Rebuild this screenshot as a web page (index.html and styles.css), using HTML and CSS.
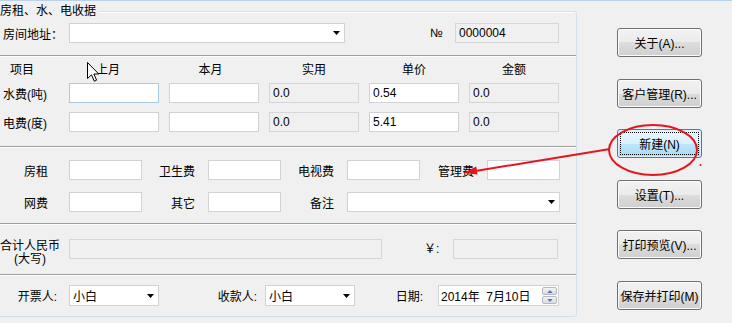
FILE: index.html
```html
<!DOCTYPE html>
<html lang="zh-CN">
<head>
<meta charset="utf-8">
<title>房租、水、电收据</title>
<link rel="stylesheet" href="styles.css">
</head>
<body>
<div class="window">
  <div class="group">
    <span class="legend">房租、水、电收据</span>

    <div class="sec sec-addr">
      <span class="addr-lbl">房间地址：</span>
      <div class="combo addr-combo"><span></span><svg class="arr" width="7" height="4" viewBox="0 0 7 4"><path d="M0 0h7L3.5 4z"/></svg></div>
      <span class="no">№</span>
      <div class="field ro no-box">0000004</div>
    </div>

    <div class="sec sec-util">
      <div class="util-grid hdr">
        <span class="h-item">项目</span>
        <span class="h h-prev">上月</span>
        <span class="h h-cur">本月</span>
        <span class="h">实用</span>
        <span class="h">单价</span>
        <span class="h">金额</span>
      </div>
      <div class="util-grid rows">
        <span class="row-lbl">水费(吨)</span>
        <div class="field hover"></div>
        <div class="field"></div>
        <div class="field ro">0.0</div>
        <div class="field">0.54</div>
        <div class="field ro">0.0</div>
        <span class="row-lbl">电费(度)</span>
        <div class="field"></div>
        <div class="field"></div>
        <div class="field ro">0.0</div>
        <div class="field">5.41</div>
        <div class="field ro">0.0</div>
      </div>
    </div>

    <div class="sec sec-fees">
      <span class="f-lbl first">房租</span>
      <div class="field"></div>
      <span class="f-lbl">卫生费</span>
      <div class="field"></div>
      <span class="f-lbl">电视费</span>
      <div class="field"></div>
      <span class="f-lbl">管理费</span>
      <div class="field"></div>
      <span class="f-lbl first">网费</span>
      <div class="field"></div>
      <span class="f-lbl">其它</span>
      <div class="field"></div>
      <span class="f-lbl">备注</span>
      <div class="combo memo"><span></span><svg class="arr" width="7" height="4" viewBox="0 0 7 4"><path d="M0 0h7L3.5 4z"/></svg></div>
    </div>

    <div class="sec sec-total">
      <span class="total-lbl">合计人民币<br>(大写)</span>
      <div class="field ro big"></div>
      <span class="yen">￥:</span>
      <div class="field ro yen-box"></div>
    </div>

    <div class="sec sec-sign">
      <span class="s-lbl s1">开票人:</span>
      <div class="combo sel"><span>小白</span><svg class="arr" width="7" height="4" viewBox="0 0 7 4"><path d="M0 0h7L3.5 4z"/></svg></div>
      <span class="s-lbl s2">收款人:</span>
      <div class="combo sel"><span>小白</span><svg class="arr" width="7" height="4" viewBox="0 0 7 4"><path d="M0 0h7L3.5 4z"/></svg></div>
      <span class="s-lbl s3">日期:</span>
      <div class="date">
        <span>2014年&nbsp;&nbsp;7月10日</span>
        <div class="spin">
          <div class="spin-btn"><svg width="7" height="4" viewBox="0 0 7 4"><path d="M0 4h7L3.5 0z"/></svg></div>
          <div class="spin-btn"><svg width="7" height="4" viewBox="0 0 7 4"><path d="M0 0h7L3.5 4z"/></svg></div>
        </div>
      </div>
    </div>
  </div>

  <div class="buttons">
    <div class="btn">关于(A)...</div>
    <div class="btn">客户管理(R)...</div>
    <div class="btn def">新建(N)</div>
    <div class="btn">设置(T)...</div>
    <div class="btn">打印预览(V)...</div>
    <div class="btn">保存并打印(M)</div>
  </div>
</div>

<svg class="cursor" width="13" height="20" viewBox="0 0 13 20"><path d="M0.5 0.5V16.5L4.5 12.8L7.3 19.2L9.6 18.2L6.9 12H11.8Z" fill="#fff" stroke="#000" stroke-width="1" stroke-linejoin="round"/></svg>

<svg class="annot" width="732" height="323" viewBox="0 0 732 323">
  <ellipse cx="653" cy="149" rx="44" ry="25" fill="none" stroke="#e8141c" stroke-width="2"/>
  <line x1="610" y1="148" x2="474" y2="170.2" stroke="#e8141c" stroke-width="2"/>
  <polygon points="463,172 476.3,165.6 477.5,173.6" fill="#e8141c"/>
  <circle cx="700.5" cy="164" r="1" fill="#e8141c"/>
</svg>
</body>
</html>
```
FILE: styles.css
```css
* { box-sizing: border-box; }
html, body { margin: 0; padding: 0; }
body {
  width: 732px;
  height: 323px;
  overflow: hidden;
  position: relative;
  background: #f0f0f0;
  border-top: 1px solid #b9d1ea;
  font-family: "Liberation Sans", "Noto Sans CJK SC", sans-serif;
  font-size: 12px;
  color: #000;
}
.window { display: flex; align-items: flex-start; }

/* group box */
.group {
  position: relative;
  margin: 10px 0 0 -2px;
  width: 579px;
  height: 306px;
  border: 1px solid #d5dfe5;
  border-radius: 3px;
  box-shadow: inset 1px 1px 0 #fff;
}
.legend {
  position: absolute;
  top: -8px;
  left: 1px;
  line-height: 14px;
  padding-right: 3px;
  background: #f0f0f0;
}
.sec {
  padding-left: 1px;
  border-top: 1px solid #a0a0a0;
  box-shadow: inset 0 1px 0 #fff;
}
.sec-addr {
  border-top: 0;
  box-shadow: none;
  display: flex;
  align-items: center;
  padding: 11px 0 12px 1px;
}

/* fields */
.field {
  height: 20px;
  line-height: 18px;
  padding-left: 3px;
  background: #fff;
  border: 1px solid #d0d2d6;
  white-space: nowrap;
}
.field.ro { background: #f0f0f0; border-color: #d6d6d6; }
.field.hover { border-color: #a9c9e6; }
.combo {
  height: 20px;
  display: flex;
  align-items: center;
  justify-content: space-between;
  padding: 0 4px 0 3px;
  background: #fff;
  border: 1px solid #d0d2d6;
}
.arr { display: block; }

.addr-lbl { width: 69px; padding-left: 3px; }
.addr-combo { width: 276px; }
.no { margin-left: 85px; width: 25px; }
.no-box { width: 104px; }

/* utilities table */
.util-grid {
  display: grid;
  grid-template-columns: 59px repeat(5, 90px);
  column-gap: 10px;
}
.sec-util { padding-top: 7px; padding-bottom: 14px; }
.hdr { height: 14px; line-height: 14px; margin-bottom: 6px; }
.h-item { padding-left: 10px; }
.h { text-align: center; }
.h-prev { padding-right: 12px; }
.h-cur { padding-right: 7px; }
.rows { row-gap: 9px; grid-auto-rows: 20px; align-items: center; }
.row-lbl { padding-left: 3px; }

/* other fees */
.sec-fees {
  display: grid;
  grid-template-columns: 69px 73px 66px 73px 66px 73px 67px 73px;
  grid-auto-rows: 20px;
  row-gap: 12px;
  align-items: center;
  padding-top: 13px;
  padding-bottom: 11px;
}
.f-lbl { text-align: right; padding-right: 13px; }
.f-lbl.first { padding-right: 21px; }
.memo { grid-column: span 3; }

/* total */
.sec-total {
  display: flex;
  align-items: flex-start;
  height: 51px;
  padding-top: 15px;
}
.total-lbl {
  width: 60px;
  height: 20px;
  margin-top: 1px;
  line-height: 13px;
  text-align: center;
  white-space: nowrap;
}
.big { width: 313px; margin-left: 9px; }
.yen { margin-left: 42px; width: 29px; line-height: 20px; }
.yen-box { width: 105px; }

/* signatures */
.sec-sign {
  display: flex;
  align-items: center;
  padding-top: 10px;
}
.sel { width: 90px; height: 21px; }
.s-lbl { text-align: right; }
.s1 { width: 69px; padding-right: 12px; }
.s2 { width: 106px; padding-right: 8px; }
.s3 { width: 83px; padding-right: 15px; }
.date {
  width: 121px;
  height: 21px;
  display: flex;
  align-items: center;
  justify-content: space-between;
  padding: 0 1px 0 2px;
  background: #fff;
  border: 1px solid #d0d2d6;
}
.spin { display: flex; flex-direction: column; gap: 1px; }
.spin-btn {
  width: 15px;
  height: 8px;
  display: flex;
  align-items: center;
  justify-content: center;
  border: 1px solid #b5b8bd;
  border-radius: 2px;
  background: linear-gradient(#f4f4f4, #dcdcdc);
}
.spin-btn svg { width: 6px; height: 3px; fill: #4f73c9; }

/* buttons */
.buttons {
  display: flex;
  flex-direction: column;
  gap: 21.6px;
  margin: 27px 0 0 40px;
}
.btn {
  position: relative;
  width: 85px;
  height: 29px;
  display: flex;
  align-items: center;
  justify-content: center;
  white-space: nowrap;
  border: 1px solid #707070;
  border-radius: 3px;
  background: linear-gradient(#f2f2f2 0%, #ebebeb 50%, #dddddd 50%, #cfcfcf 100%);
  box-shadow: inset 0 0 0 1px #fbfbfb;
}
.btn.def {
  border-color: #3c7fb1;
  background: linear-gradient(#eaf6fd 0%, #d9f0fc 50%, #bee6fd 50%, #a7d9f5 100%);
  box-shadow: inset 0 0 0 1px #dcefff;
}
.btn.def::after {
  content: "";
  position: absolute;
  inset: 2px;
  border: 1px dotted #000;
}

/* overlays */
.cursor { position: absolute; left: 87px; top: 61px; }
.annot { position: absolute; left: 0; top: 0; pointer-events: none; }
```
